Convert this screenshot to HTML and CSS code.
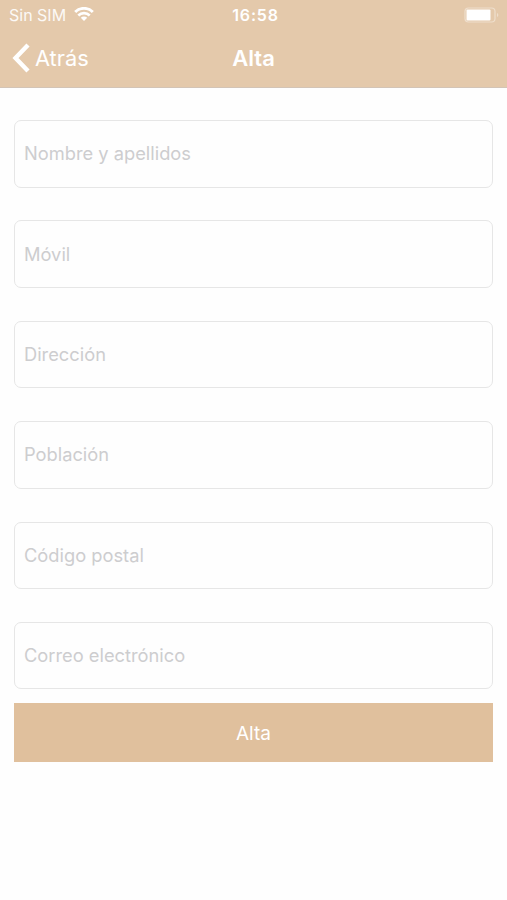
FILE: index.html
```html
<!DOCTYPE html>
<html lang="es">
<head>
    <meta charset="UTF-8">
    <title>Alta</title>
    <link rel="stylesheet" href="styles.css">
</head>
<body>
<header class="top">
    <div class="status">
        <div class="status_left">
            <span class="carrier">Sin SIM</span>
            <svg class="wifi" width="20" height="14" viewBox="0 0 20 14">
                <path d="M1.200 5a12.400 12.400 0 0 1 17.600 0" fill="none" stroke="#fff" stroke-width="2.900"/>
                <path d="M4.300 8.500a8 8 0 0 1 11.400 0" fill="none" stroke="#fff" stroke-width="2.600"/>
                <path d="M10 14l-3.200-3.200a4.500 4.500 0 0 1 6.400 0z" fill="#fff"/>
            </svg>
        </div>
        <span class="time">16:58</span>
        <svg class="battery" width="36" height="16" viewBox="0 0 36 16">
            <rect x="1" y="1" width="30" height="14" rx="3.5" fill="none" stroke="#fff" stroke-opacity="0.4" stroke-width="1.2"/>
            <rect x="2.500" y="2.500" width="24" height="11" rx="1" fill="#fff"/>
            <path d="M33 6v4c1.800-.6 1.800-3.400 0-4z" fill="#fff" fill-opacity="0.4"/>
        </svg>
    </div>
    <nav class="nav">
        <a class="back">
            <svg width="18" height="30" viewBox="0 0 18 30">
                <path d="M16 2L3.500 15L16 28" fill="none" stroke="#fff" stroke-width="4.400"/>
            </svg>
            <span>Atrás</span>
        </a>
        <h1 class="title">Alta</h1>
    </nav>
</header>
<form class="form">
    <input class="field" type="text" placeholder="Nombre y apellidos">
    <input class="field" type="text" placeholder="Móvil">
    <input class="field" type="text" placeholder="Dirección">
    <input class="field" type="text" placeholder="Población">
    <input class="field" type="text" placeholder="Código postal">
    <input class="field" type="text" placeholder="Correo electrónico">
    <button class="submit" type="button">Alta</button>
</form>
</body>
</html>
```
FILE: styles.css
```css
* {
    margin: 0;
    padding: 0;
    box-sizing: border-box;
}

body {
    background: #fefefe;
    font-family: Inter, "Liberation Sans", sans-serif;
}

.top {
    height: 88px;
    background: #e4c9ab;
    border-bottom: 1px solid #d3c4b6;
    color: #fff;
}

.status {
    display: grid;
    grid-template-columns: 1fr auto 1fr;
    align-items: center;
    height: 29px;
    padding: 0 7px 0 9px;
}

.status_left {
    display: flex;
    align-items: center;
    gap: 8px;
}

.carrier {
    font-size: 16px;
    opacity: 0.9;
}

.wifi {
    margin-bottom: 2px;
}

.time {
    font-size: 16px;
    font-weight: 600;
    letter-spacing: 0.8px;
    margin-left: 2px;
}

.battery {
    justify-self: end;
}

.nav {
    display: grid;
    grid-template-columns: 1fr auto 1fr;
    align-items: center;
    height: 57px;
    padding: 0 12px;
}

.back {
    display: flex;
    align-items: center;
    gap: 5px;
    font-size: 21.8px;
}

.title {
    font-size: 22px;
    font-weight: 600;
}

.form {
    padding: 32px 14px 0;
}

.field {
    display: block;
    width: 100%;
    height: 67.5px;
    margin-bottom: 32.9px;
    padding: 0 9px 1px;
    border: 1px solid #e6e6e6;
    border-radius: 7px;
    background: #fefefe;
    font-family: inherit;
    font-size: 18.3px;
    outline: none;
}

.field::placeholder {
    color: #cdcdcf;
}

.submit {
    display: block;
    width: 100%;
    height: 59px;
    margin-top: -19px;
    padding-top: 2px;
    border: none;
    background: #e0c09d;
    color: #fff;
    font-family: inherit;
    font-size: 19px;
}
```
